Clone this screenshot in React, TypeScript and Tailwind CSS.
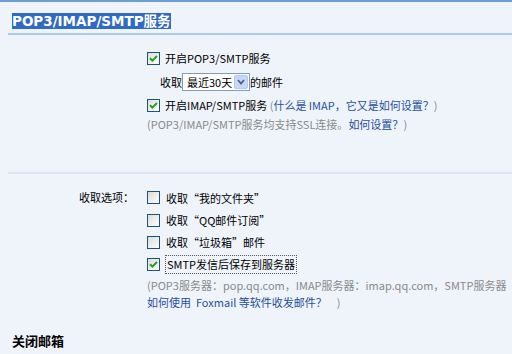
import React from "react";

const Check = ({ checked }: { checked?: boolean }) => (
  <span className="relative inline-flex h-[13px] w-[13px] shrink-0 items-center justify-center border border-[#1c5180] bg-gradient-to-br from-[#dcdcd7] to-white">
    {checked && (
      <svg width="9" height="9" viewBox="0 0 9 9" className="block">
        <path d="M1 4.2 L3.4 6.6 L8 2" stroke="#21a121" strokeWidth="2" fill="none" />
      </svg>
    )}
  </span>
);

const link = "text-[#1f4f9a]";
const gray = "text-[#8a8a8a]";

export default function App() {
  return (
    <div
      className="h-[354px] w-[512px] overflow-hidden border-t-2 border-[#6d9fd6] bg-[#eff4fb] text-[11px] text-black"
      style={{ fontFamily: '"Noto Sans CJK SC", "Liberation Sans", sans-serif' }}
    >
      <div className="pl-[12px] pt-[11px]">
        <div className="flex h-[16px]">
          <span
            className="bg-[#316ac5] text-[13.5px] font-bold leading-[16px] text-white"
            style={{ fontFamily: '"DejaVu Sans", "Noto Sans CJK SC", sans-serif' }}
          >
            POP3/IMAP/SMTP服务
          </span>
        </div>
      </div>
      <div className="ml-[8px] mt-[4px] h-[2px] bg-[#a9c9ee]" />

      <div className="pl-[147px]">
        <div className="mt-[13px] flex h-[20px] items-center">
          <Check checked />
          <span className="ml-[5px] leading-[16px]">开启POP3/SMTP服务</span>
        </div>
        <div className="mt-[4px] flex h-[20px] items-center whitespace-nowrap pl-[13px]">
          <span className="leading-[16px]">收取</span>
          <span className="flex h-[18px] w-[68px] shrink-0 items-center border border-[#7f9db9] bg-white">
            <span className="flex-1 whitespace-nowrap pl-[4px] leading-[16px]">最近30天</span>
            <span className="mr-[1px] flex h-[14px] w-[14px] items-center justify-center rounded-[2px] border border-[#b4c8f0] bg-[#c6d7fa]">
              <svg width="8" height="6" viewBox="0 0 8 6">
                <path d="M1 1 L4 4.5 L7 1" stroke="#4d6185" strokeWidth="1.8" fill="none" />
              </svg>
            </span>
          </span>
          <span className="leading-[16px]">的邮件</span>
        </div>
        <div className="mt-[3px] flex h-[20px] items-center">
          <Check checked />
          <span className="ml-[5px] whitespace-nowrap leading-[16px]">
            开启IMAP/SMTP服务 <span className={gray}>(</span>
            <span className={link}>什么是 IMAP，它又是如何设置？</span>
            <span className={gray}>)</span>
          </span>
        </div>
        <div className={`flex h-[18px] items-center whitespace-nowrap leading-[16px] ${gray}`}>
          <span>
            (POP3/IMAP/SMTP服务均支持SSL连接。<span className={link}>如何设置？</span>)
          </span>
        </div>
      </div>

      <div className="ml-[8px] mt-[39px] h-[2px] bg-[#dbe6f2]" />

      <div className="mt-[12px] flex">
        <div className="w-[134px] shrink-0 whitespace-nowrap pt-[3px] text-right leading-[16px]">收取选项：</div>
        <div className="ml-[13px] flex min-w-0 flex-1 flex-col">
          <div className="flex h-[23px] items-center">
            <Check />
            <span className="ml-[6px] leading-[16px]">收取“我的文件夹”</span>
          </div>
          <div className="flex h-[22px] items-center">
            <Check />
            <span className="ml-[6px] leading-[16px]">收取“QQ邮件订阅”</span>
          </div>
          <div className="flex h-[22px] items-center">
            <Check />
            <span className="ml-[6px] leading-[16px]">收取“垃圾箱”邮件</span>
          </div>
          <div className="flex h-[22px] items-center">
            <Check checked />
            <span className="ml-[5px] border border-dotted border-[#555] px-[1px] leading-[17px]">
              SMTP发信后保存到服务器
            </span>
          </div>
          <div className={`mt-[1px] flex h-[17px] items-center whitespace-nowrap leading-[16px] ${gray}`}>
            <span>(POP3服务器：pop.qq.com，IMAP服务器：imap.qq.com，SMTP服务器</span>
          </div>
          <div className="flex h-[17px] items-center whitespace-nowrap leading-[16px]">
            <span className={link}>如何使用&nbsp;&nbsp;Foxmail 等软件收发邮件？</span>
            <span className={`ml-[10px] ${gray}`}>)</span>
          </div>
        </div>
      </div>

      <div className="mt-[22px] flex h-[18px] items-center pl-[12px] text-[13px] font-bold leading-[18px]">
        关闭邮箱
      </div>
    </div>
  );
}
